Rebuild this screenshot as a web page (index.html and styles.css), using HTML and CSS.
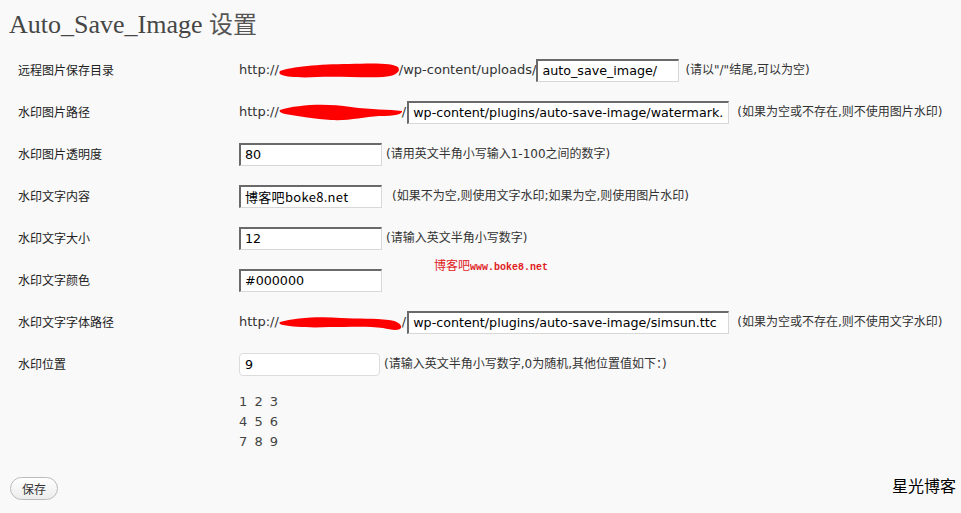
FILE: index.html
```html
<!DOCTYPE html>
<html lang="zh-CN">
<head>
    <meta charset="UTF-8">
    <title>Auto_Save_Image 设置</title>
    <link rel="stylesheet" href="styles.css">
</head>
<body>
    <div class="wrap">
        <h2 class="page-title">Auto_Save_Image <span class="cjk">设置</span></h2>

        <form id="form-ase" action="#" method="post">
            <div class="form-row">
                <label for="input-dir">远程图片保存目录</label>
                <div class="field">
                    <span class="url">http://</span>
                    <svg class="blot" width="121" height="20" viewBox="0 0 121 20"><path d="M1,11 C12,7 40,4 70,4 C95,3 114,3 119,7 C122,11 118,16 104,17 C85,18 60,16 38,17 C22,18 8,17 3,15 C0,14 0,12 1,11 Z" fill="#f00"/></svg>
                    <span class="url">/wp-content/uploads/</span>
                    <input type="text" id="input-dir" class="inset w-short" value="auto_save_image/" name="dir">
                    <span class="hint gap-6">(请以"/"结尾,可以为空)</span>
                </div>
            </div>
            <div class="form-row">
                <label for="input-mark">水印图片路径</label>
                <div class="field">
                    <span class="url">http://</span>
                    <svg class="blot" width="124" height="20" viewBox="0 0 124 20"><path d="M1,8 C18,3 45,1 72,5 C92,8 110,7 123,9 C124,12 116,14 100,14 C84,15 70,19 52,18 C36,17 20,14 6,12 C1,11 0,9 1,8 Z" fill="#f00"/></svg>
                    <span class="url">/</span>
                    <input type="text" id="input-mark" class="inset w-long" value="wp-content/plugins/auto-save-image/watermark.png" name="mark">
                    <span class="hint gap-8">(如果为空或不存在,则不使用图片水印)</span>
                </div>
            </div>
            <div class="form-row">
                <label for="input-alpha">水印图片透明度</label>
                <div class="field">
                    <input type="text" id="input-alpha" class="inset w-short" value="80" name="alpha">
                    <span class="hint gap-4">(请用英文半角小写输入1-100之间的数字)</span>
                </div>
            </div>
            <div class="form-row">
                <label for="input-text">水印文字内容</label>
                <div class="field">
                    <input type="text" id="input-text" class="inset w-short cjk-value" value="博客吧boke8.net" name="text">
                    <span class="hint gap-10">(如果不为空,则使用文字水印;如果为空,则使用图片水印)</span>
                </div>
            </div>
            <div class="form-row">
                <label for="input-size">水印文字大小</label>
                <div class="field">
                    <input type="text" id="input-size" class="inset w-short" value="12" name="size">
                    <span class="hint gap-4">(请输入英文半角小写数字)</span>
                </div>
            </div>
            <div class="form-row">
                <label for="input-color">水印文字颜色</label>
                <div class="field">
                    <input type="text" id="input-color" class="inset w-short" value="#000000" name="color">
                </div>
            </div>
            <div class="form-row">
                <label for="input-font">水印文字字体路径</label>
                <div class="field">
                    <span class="url">http://</span>
                    <svg class="blot" width="124" height="20" viewBox="0 0 124 20"><path d="M1,10 C15,6 40,4 62,6 C80,7 95,6 110,8 C118,9 123,12 122,16 C120,19 112,18 104,16 C90,14 70,15 50,15 C32,16 15,15 4,13 C0,12 0,11 1,10 Z" fill="#f00"/></svg>
                    <span class="url">/</span>
                    <input type="text" id="input-font" class="inset w-long" value="wp-content/plugins/auto-save-image/simsun.ttc" name="font">
                    <span class="hint gap-8">(如果为空或不存在,则不使用文字水印)</span>
                </div>
            </div>
            <div class="form-row">
                <label for="input-pos">水印位置</label>
                <div class="field">
                    <input type="text" id="input-pos" class="plain" value="9" name="pos">
                    <span class="hint gap-4">(请输入英文半角小写数字,0为随机,其他位置值如下<span class="cjk-only">：</span>)</span>
                </div>
            </div>

            <div class="grid-map">
                <div>1 2 3</div>
                <div>4 5 6</div>
                <div>7 8 9</div>
            </div>

            <div class="submit">
                <button type="submit" class="button">保存</button>
            </div>
        </form>

        <div class="stamp">博客吧<span>www.boke8.net</span></div>
        <div class="signature">星光博客</div>
    </div>
</body>
</html>
```

FILE: styles.css
```css
*,
*::after,
*::before{
    padding: 0;
    margin: 0;
    box-sizing: border-box;
}
html{
    background: #f9f9f9;
}
body{
    margin: 0;
    font: normal 13px/1.4 "DejaVu Sans", "Noto Sans CJK SC", sans-serif;
    color: #333;
}
.wrap{
    position: relative;
    width: 961px;
    height: 513px;
}
.page-title{
    font: normal 26px/30px "Liberation Serif", "Noto Sans CJK SC", serif;
    color: #464646;
    padding: 8px 9px 9px;
}
.page-title .cjk{
    font-family: "Noto Sans CJK SC", sans-serif;
    font-size: 24px;
    color: #555;
}
.form-row{
    display: flex;
    align-items: center;
    height: 42px;
}
.form-row label{
    width: 239px;
    padding-left: 18px;
    font-size: 12px;
    font-family: "Noto Sans CJK SC", sans-serif;
    color: #222;
}
.field{
    display: flex;
    align-items: center;
    white-space: nowrap;
}
.url{
    color: #333;
}
.blot{
    display: block;
    margin: 0 -1px 0 0;
}
.inset,
.plain{
    height: 23px;
    font: normal 12.7px "DejaVu Sans", "Noto Sans CJK SC", sans-serif;
    color: #000;
    padding: 0 4px;
    background: #fff;
    outline: none;
}
.inset{
    border-style: solid;
    border-width: 2px 1px 1px 2px;
    border-color: #6a6a6a #d8d8d8 #d8d8d8 #6a6a6a;
}
.cjk-value{
    font-family: "Noto Sans CJK SC", sans-serif;
    font-size: 13px;
    letter-spacing: 0.3px;
}
.plain{
    border: 1px solid #dcdcdc;
    border-radius: 4px;
    width: 141px;
    padding-left: 5px;
}
.w-short{
    width: 143px;
}
.w-long{
    width: 322px;
    margin-left: 1px;
}
.hint{
    font-size: 12px;
    color: #333;
}
.cjk-only{
    font-family: "Noto Sans CJK JP", sans-serif;
}
.gap-4{ margin-left: 4px; }
.gap-6{ margin-left: 6px; }
.gap-8{ margin-left: 8px; }
.gap-10{ margin-left: 10px; }

.grid-map{
    margin: 7px 0 0 239px;
    line-height: 20px;
    font-size: 13px;
    word-spacing: 3px;
    color: #444;
}
.submit{
    padding: 25px 0 0 10px;
}
.button{
    width: 48px;
    height: 23px;
    border: 1px solid #bbb;
    border-radius: 12px;
    background: linear-gradient(#fff, #ececec);
    font: normal 12px "Noto Sans CJK SC", sans-serif;
    color: #333;
    cursor: pointer;
}

/* watermarks sitting on top of the screenshot */
.stamp{
    position: absolute;
    left: 434px;
    top: 257px;
    color: #e0201c;
    font: normal 12px/16px "Noto Sans CJK SC", sans-serif;
}
.stamp span{
    font: bold 10px "Liberation Mono", monospace;
}
.signature{
    position: absolute;
    left: 892px;
    top: 474px;
    font: normal 16px/22px "Noto Sans CJK SC", sans-serif;
    color: #000;
}
```
